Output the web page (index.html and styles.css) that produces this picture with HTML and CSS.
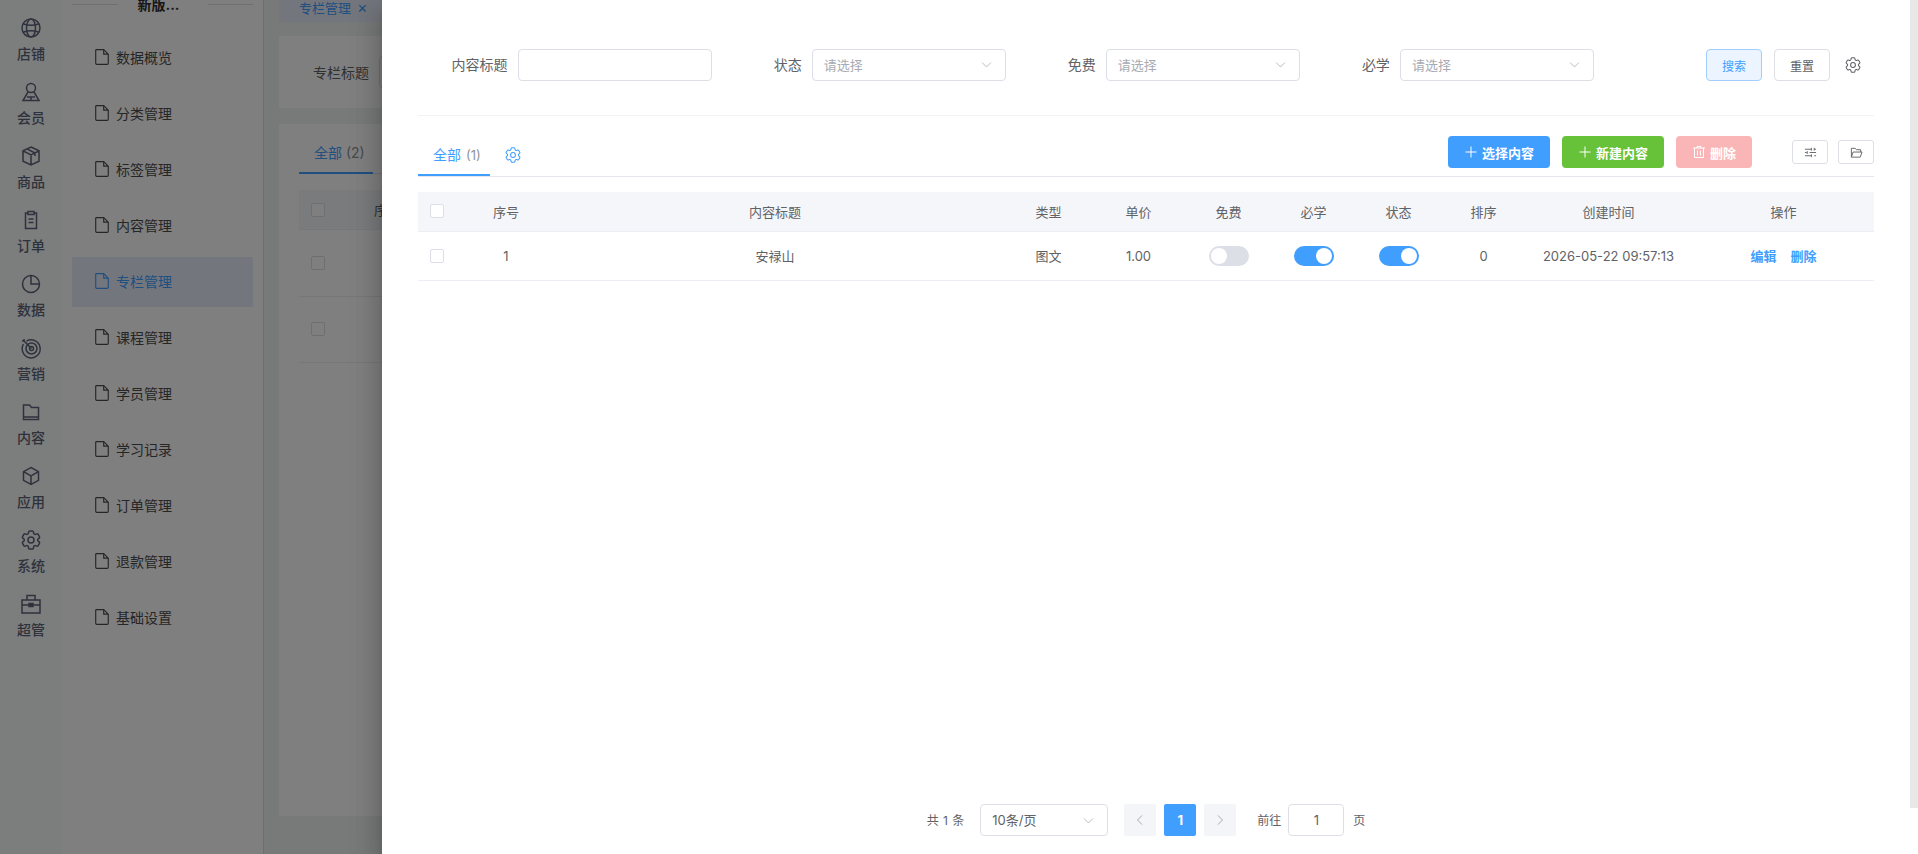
FILE: index.html
```html
<!DOCTYPE html>
<html lang="zh-CN">
<head>
    <meta charset="UTF-8">
    <meta name="viewport" content="width=device-width, initial-scale=1.0">
    <title>专栏管理</title>
    <link rel="stylesheet" href="styles.css">
</head>
<body>
    <svg class="defs" width="0" height="0">
        <symbol id="i-doc" viewBox="2 1 12 14"><path d="M3 1.500h6.500L13.500 5.500v8a1 1 0 0 1-1 1h-9a1 1 0 0 1-1-1v-11a1 1 0 0 1 .5-1zM9.500 1.500v4h4"/></symbol>
        <symbol id="i-gear" viewBox="2 2 20 20"><path d="M9.594 3.94c.09-.542.56-.94 1.11-.94h2.593c.55 0 1.02.398 1.11.94l.213 1.281c.063.374.313.686.645.87.074.04.147.083.22.127.325.196.72.257 1.075.124l1.217-.456a1.125 1.125 0 0 1 1.37.49l1.296 2.247a1.125 1.125 0 0 1-.26 1.431l-1.003.827c-.293.241-.438.613-.43.992a7.723 7.723 0 0 1 0 .255c-.008.378.137.75.43.991l1.004.827c.424.35.534.955.26 1.43l-1.298 2.247a1.125 1.125 0 0 1-1.369.491l-1.217-.456c-.355-.133-.75-.072-1.076.124a6.47 6.47 0 0 1-.22.128c-.331.183-.581.495-.644.869l-.213 1.281c-.09.543-.56.94-1.11.94h-2.594c-.55 0-1.019-.398-1.11-.94l-.213-1.281c-.062-.374-.312-.686-.644-.87a6.52 6.52 0 0 1-.22-.127c-.325-.196-.72-.257-1.076-.124l-1.217.456a1.125 1.125 0 0 1-1.369-.49l-1.297-2.247a1.125 1.125 0 0 1 .26-1.431l1.004-.827c.292-.24.437-.613.43-.991a6.932 6.932 0 0 1 0-.255c.007-.38-.138-.751-.43-.992l-1.004-.827a1.125 1.125 0 0 1-.26-1.43l1.297-2.247a1.125 1.125 0 0 1 1.37-.491l1.216.456c.356.133.751.072 1.076-.124.072-.044.146-.086.22-.128.332-.183.582-.495.644-.869l.214-1.28Z"/><circle cx="12" cy="12" r="3"/></symbol>
        <symbol id="i-down" viewBox="0 0 16 16"><path d="M2.500 5.500L8 11l5.500-5.500"/></symbol>
        <symbol id="i-plus" viewBox="0 0 14 14"><path d="M7 1.500v11M1.500 7h11"/></symbol>
    </svg>

    <div class="app">
        <nav class="rail">
            <a class="rail-item"><svg class="rail-icon" viewBox="0 0 20 20"><circle cx="10" cy="10" r="9"/><ellipse cx="10" cy="10" rx="4.500" ry="9"/><path d="M2.500 6c4.500 1.600 10.500 1.600 15 0M2.500 14c4.500-1.600 10.500-1.600 15 0"/></svg>店铺</a>
            <a class="rail-item"><svg class="rail-icon" viewBox="0 0 20 20"><circle cx="10" cy="6" r="4.500"/><path d="M7 10l-5 8.500h16L13 10M10 14.500v4M6 15h8"/></svg>会员</a>
            <a class="rail-item"><svg class="rail-icon" viewBox="0 0 20 20"><path d="M10 1l8 3.800v10.400L10 19l-8-3.800V4.800zM2 4.800L10 9l8-4.200M10 9v10M6 2.900l8 4.100v3"/></svg>商品</a>
            <a class="rail-item"><svg class="rail-icon" viewBox="0 0 20 20"><path d="M7 3H4.500v15.500h11V3H13M7 1.500h6v3H7zM7.500 9h5M7.500 12.500h5"/></svg>订单</a>
            <a class="rail-item"><svg class="rail-icon" viewBox="0 0 20 20"><circle cx="10" cy="10" r="8.500"/><path d="M10 1.500V10h8.500"/></svg>数据</a>
            <a class="rail-item"><svg class="rail-icon" viewBox="0 0 20 20"><path d="M5.500 3.200a9 9 0 1 1-3 3"/><circle cx="10.500" cy="10.500" r="5.500"/><circle cx="10.500" cy="10.500" r="2"/><path d="M10.500 10.500L3 3M1 3h2V1"/></svg>营销</a>
            <a class="rail-item"><svg class="rail-icon" viewBox="0 0 20 20"><path d="M2.500 3h6l2 2.500h7v12h-15zM2.500 15h15"/></svg>内容</a>
            <a class="rail-item"><svg class="rail-icon" viewBox="0 0 20 20"><path d="M10 1.500l7.500 4.200v8.600L10 18.500l-7.500-4.200V5.700zM2.500 5.700L10 10l7.500-4.300M10 10v8.500"/></svg>应用</a>
            <a class="rail-item"><svg class="rail-icon"><use href="#i-gear"/></svg>系统</a>
            <a class="rail-item"><svg class="rail-icon" viewBox="0 0 20 20"><path d="M1 6h18v13H1zM6 6V1.500h8V6M1 11h18M8 9.500h4v3H8z"/></svg>超管</a>
        </nav>

        <aside class="side">
            <div class="side-title"><span>新版...</span></div>
            <a class="menu-item"><svg class="menu-icon"><use href="#i-doc"/></svg>数据概览</a>
            <a class="menu-item"><svg class="menu-icon"><use href="#i-doc"/></svg>分类管理</a>
            <a class="menu-item"><svg class="menu-icon"><use href="#i-doc"/></svg>标签管理</a>
            <a class="menu-item"><svg class="menu-icon"><use href="#i-doc"/></svg>内容管理</a>
            <a class="menu-item active"><svg class="menu-icon"><use href="#i-doc"/></svg>专栏管理</a>
            <a class="menu-item"><svg class="menu-icon"><use href="#i-doc"/></svg>课程管理</a>
            <a class="menu-item"><svg class="menu-icon"><use href="#i-doc"/></svg>学员管理</a>
            <a class="menu-item"><svg class="menu-icon"><use href="#i-doc"/></svg>学习记录</a>
            <a class="menu-item"><svg class="menu-icon"><use href="#i-doc"/></svg>订单管理</a>
            <a class="menu-item"><svg class="menu-icon"><use href="#i-doc"/></svg>退款管理</a>
            <a class="menu-item"><svg class="menu-icon"><use href="#i-doc"/></svg>基础设置</a>
        </aside>

        <main class="main">
            <div class="page-tabs">
                <div class="page-tab">专栏管理<span class="page-tab-x">×</span></div>
            </div>
            <div class="card filter-card">
                <span>专栏标题</span>
                <div class="stub-input"></div>
            </div>
            <div class="card list-card">
                <div class="list-tabs"><div class="list-tab">全部 <em>(2)</em></div></div>
                <div class="stub-head"><span class="stub-check"></span><span class="stub-no">序号</span></div>
                <div class="stub-row"><span class="stub-check"></span></div>
                <div class="stub-row"><span class="stub-check"></span></div>
            </div>
        </main>
    </div>

    <div class="overlay"></div>

    <section class="drawer">
        <div class="drawer-body">
            <form class="search-form">
                <div class="form-item">
                    <label>内容标题</label>
                    <div class="field"></div>
                </div>
                <div class="form-item">
                    <label>状态</label>
                    <div class="field">请选择<svg class="caret"><use href="#i-down"/></svg></div>
                </div>
                <div class="form-item">
                    <label>免费</label>
                    <div class="field">请选择<svg class="caret"><use href="#i-down"/></svg></div>
                </div>
                <div class="form-item">
                    <label>必学</label>
                    <div class="field">请选择<svg class="caret"><use href="#i-down"/></svg></div>
                </div>
                <div class="form-actions">
                    <button type="button" class="btn-plain btn-search">搜索</button>
                    <button type="button" class="btn-plain">重置</button>
                    <svg class="gear"><use href="#i-gear"/></svg>
                </div>
            </form>

            <div class="toolbar">
                <div class="tab-active">全部<em>(1)</em></div>
                <svg class="gear gear-blue"><use href="#i-gear"/></svg>
                <div class="toolbar-actions">
                    <button type="button" class="btn btn-blue"><svg class="btn-icon"><use href="#i-plus"/></svg>选择内容</button>
                    <button type="button" class="btn btn-green"><svg class="btn-icon"><use href="#i-plus"/></svg>新建内容</button>
                    <button type="button" class="btn btn-pink">
                        <svg class="btn-icon" viewBox="0 0 14 14"><path d="M1 3h12M5 3V1.500h4V3M2.500 3v9.500h9V3M5.500 5.500v5M8.500 5.500v5"/></svg>删除
                    </button>
                    <button type="button" class="btn-small">
                        <svg class="small-icon" viewBox="0 0 14 14"><path d="M1 3.500h7M11 3.500h2M8 2v3M11 2v3M1 7h2M6 7h7M3.500 5.500v3M1 10.500h7M11 10.500h2M8 9v3"/></svg>
                    </button>
                    <button type="button" class="btn-small btn-small-last">
                        <svg class="small-icon" viewBox="0 0 14 14"><path d="M1.500 12V2.500h4l1.500 1.500h4.500v2.500M1.500 12l1.800-5.500h9.700L11 12z"/></svg>
                    </button>
                </div>
            </div>

            <table class="data-table">
                <colgroup>
                    <col class="col-check">
                    <col class="col-no">
                    <col class="col-title">
                    <col class="col-85">
                    <col class="col-price">
                    <col class="col-85">
                    <col class="col-85">
                    <col class="col-85">
                    <col class="col-85">
                    <col class="col-time">
                    <col class="col-op">
                </colgroup>
                <thead>
                    <tr>
                        <th class="cell-check"><span class="check"></span></th>
                        <th>序号</th>
                        <th>内容标题</th>
                        <th>类型</th>
                        <th>单价</th>
                        <th>免费</th>
                        <th>必学</th>
                        <th>状态</th>
                        <th>排序</th>
                        <th>创建时间</th>
                        <th class="cell-op">操作</th>
                    </tr>
                </thead>
                <tbody>
                    <tr>
                        <td class="cell-check"><span class="check"></span></td>
                        <td>1</td>
                        <td>安禄山</td>
                        <td>图文</td>
                        <td>1.00</td>
                        <td><span class="switch"></span></td>
                        <td><span class="switch on"></span></td>
                        <td><span class="switch on"></span></td>
                        <td>0</td>
                        <td>2026-05-22 09:57:13</td>
                        <td class="cell-op"><a>编辑</a><a>删除</a></td>
                    </tr>
                </tbody>
            </table>

            <div class="pager">
                <span class="pager-total">共 1 条</span>
                <div class="pager-size"><span>10条/页</span><svg class="caret"><use href="#i-down"/></svg></div>
                <button type="button" class="page-btn"><svg class="page-arrow" viewBox="0 0 12 12"><path d="M8 1.500L3.500 6 8 10.500"/></svg></button>
                <button type="button" class="page-btn current">1</button>
                <button type="button" class="page-btn"><svg class="page-arrow" viewBox="0 0 12 12"><path d="M4 1.500L8.500 6 4 10.500"/></svg></button>
                <span class="pager-goto">前往</span>
                <div class="pager-input">1</div>
                <span class="pager-unit">页</span>
            </div>
        </div>
        <div class="drawer-track"></div>
    </section>
</body>
</html>
```

FILE: styles.css
```css
* {
    box-sizing: border-box;
}
html, body {
    height: 100%;
}
body {
    margin: 0;
    overflow: hidden;
    background-color: #f0f3f3;
    color: #606266;
    font-family: Inter, "Noto Sans CJK SC", sans-serif;
    font-size: 13px;
}
svg {
    fill: none;
    stroke: currentColor;
}
em {
    font-style: normal;
}
.defs {
    position: absolute;
}
.app {
    display: flex;
    height: 100vh;
}

/* left rail */
.rail {
    width: 62px;
    flex: none;
    display: flex;
    flex-direction: column;
    gap: 18px;
    padding-top: 18px;
    background-color: #f9fbfb;
}
.rail-item {
    display: flex;
    flex-direction: column;
    align-items: center;
    gap: 6px;
    color: #5c6478;
    font-size: 14px;
    font-weight: 500;
    line-height: 20px;
}
.rail-icon {
    width: 20px;
    height: 20px;
    stroke-width: 1.5;
    overflow: visible;
}

/* second column */
.side {
    width: 202px;
    flex: none;
    padding: 0 10px;
    background-color: #fff;
    border-right: 1px solid #dcdfe6;
}
.side-title {
    display: flex;
    align-items: center;
    height: 20px;
    margin: -6px 0 19px;
    color: #303133;
    font-size: 14px;
    font-weight: 700;
}
.side-title::before, .side-title::after {
    content: "";
    flex: 1;
    border-top: 1px solid #dcdfe6;
}
.side-title span {
    width: 90px;
    padding-left: 20px;
}
.menu-item {
    display: flex;
    align-items: center;
    gap: 7px;
    height: 50px;
    margin-bottom: 6px;
    padding: 0 0 2px 23px;
    color: #4c4c4c;
    font-size: 14px;
}
.menu-item.active {
    background-color: #e6eefa;
    color: #409eff;
}
.menu-icon {
    width: 14px;
    height: 16px;
}

/* page behind the drawer */
.main {
    flex: 1;
    min-width: 0;
    padding: 0 0 38px 15px;
    display: flex;
    flex-direction: column;
    background-color: #f1f3f3;
}
.page-tabs {
    height: 22px;
    margin-bottom: 14px;
}
.page-tab {
    display: flex;
    align-items: center;
    width: 200px;
    height: 22px;
    padding: 0 0 8px 20px;
    background-color: #e6eefa;
    color: #409eff;
}
.page-tab-x {
    margin-left: 6px;
    font-size: 16px;
}
.card {
    background-color: #fff;
}
.filter-card {
    display: flex;
    align-items: center;
    gap: 10px;
    height: 72px;
    margin-bottom: 16px;
    padding-left: 34px;
    font-size: 14px;
}
.stub-input {
    width: 200px;
    height: 32px;
    border: 1px solid #dcdfe6;
    border-radius: 4px;
}
.list-card {
    flex: 1;
    padding: 0 20px;
}
.list-tabs {
    height: 50px;
    border-bottom: 1px solid #e4e7ed;
}
.list-tab {
    width: 74px;
    height: 50px;
    padding-top: 18px;
    padding-left: 15px;
    border-bottom: 2px solid #409eff;
    color: #409eff;
    font-size: 14px;
    white-space: nowrap;
}
.list-tab em {
    color: #909399;
}
.stub-head, .stub-row {
    display: flex;
    align-items: center;
    padding-left: 12px;
    border-bottom: 1px solid #ebeef5;
}
.stub-head {
    height: 40px;
    margin-top: 16px;
    background-color: #f5f6fa;
}
.stub-row {
    height: 66.5px;
}
.stub-check {
    width: 14px;
    height: 14px;
    border: 1px solid #dcdfe6;
    background-color: #fff;
    border-radius: 2px;
}
.stub-no {
    margin-left: 49px;
}

.overlay {
    position: absolute;
    inset: 0;
    background-color: rgba(0, 0, 0, 0.5);
}

/* drawer */
.drawer {
    position: absolute;
    top: 0;
    right: 0;
    bottom: 0;
    width: 1536px;
    display: flex;
    align-items: flex-start;
    background-color: #fff;
    box-shadow: 0 8px 10px -5px rgba(0, 0, 0, 0.2), 0 16px 24px 2px rgba(0, 0, 0, 0.14), 0 6px 30px 5px rgba(0, 0, 0, 0.12);
}
.drawer-body {
    width: 1528px;
    height: 100%;
    padding: 49px 36px 18px;
    display: flex;
    flex-direction: column;
}
.drawer-track {
    width: 8px;
    height: 808px;
    background-color: #e8e8e8;
}
.search-form {
    display: flex;
    padding-bottom: 34px;
    border-bottom: 1px solid #f2f3f5;
}
.form-item {
    width: 294.1px;
    display: flex;
    align-items: center;
    justify-content: flex-end;
    gap: 10px;
    font-size: 14px;
}
.form-item label {
    padding-bottom: 2px;
    white-space: nowrap;
}
.field {
    width: 194.5px;
    height: 32px;
    display: flex;
    align-items: center;
    justify-content: space-between;
    padding: 0 12px 2px 11px;
    border: 1px solid #dcdfe6;
    border-radius: 4px;
    color: #a8abb2;
    font-size: 13px;
}
.caret {
    width: 13px;
    height: 13px;
    color: #a8abb2;
}
.form-actions {
    display: flex;
    align-items: center;
    gap: 12px;
    margin-left: 111.6px;
}
.btn-plain {
    width: 56px;
    height: 32px;
    padding: 0;
    border: 1px solid #dcdfe6;
    border-radius: 4px;
    background-color: #fff;
    color: #606266;
    font-family: inherit;
    font-size: 12px;
}
.btn-search {
    background-color: #ecf5ff;
    border-color: #a0cfff;
    color: #409eff;
}
.gear {
    width: 16px;
    height: 16px;
    margin-left: 3px;
    color: #606266;
    stroke-width: 1.3;
}
.gear-blue {
    margin: 18px 0 0 15px;
    color: #409eff;
}

/* tabs and buttons above the table */
.toolbar {
    display: flex;
    align-items: center;
    height: 61px;
    border-bottom: 1px solid #e4e7ed;
}
.tab-active {
    width: 72px;
    height: 60px;
    padding: 29px 0 0 15px;
    border-bottom: 2px solid #409eff;
    color: #409eff;
    font-size: 14px;
    line-height: 20px;
}
.tab-active em {
    margin-left: 5px;
    color: #909399;
    font-size: 13px;
}
.toolbar-actions {
    display: flex;
    align-items: center;
    gap: 12px;
    margin-left: auto;
    padding-top: 12px;
}
.btn {
    display: flex;
    align-items: center;
    gap: 4px;
    height: 32px;
    padding: 0 16px;
    border: 0;
    border-radius: 4px;
    color: #fff;
    font-family: inherit;
    font-size: 13px;
    font-weight: 700;
}
.btn-blue {
    background-color: #409eff;
}
.btn-green {
    background-color: #67c23a;
}
.btn-pink {
    background-color: #fab6b6;
}
.btn-icon {
    width: 14px;
    height: 14px;
}
.btn-small {
    display: flex;
    align-items: center;
    justify-content: center;
    width: 36px;
    height: 24px;
    margin-left: 28px;
    padding: 0;
    border: 1px solid #dcdfe6;
    border-radius: 3px;
    background-color: #fff;
    color: #606266;
}
.btn-small-last {
    margin-left: -2px;
}
.small-icon {
    width: 13px;
    height: 13px;
}

.data-table {
    width: 100%;
    margin-top: 15px;
    table-layout: fixed;
    border-collapse: collapse;
    text-align: center;
}
.col-check { width: 50px; }
.col-no { width: 76px; }
.col-title { width: 462px; }
.col-85 { width: 85px; }
.col-price { width: 95px; }
.col-time { width: 165px; }
.data-table th {
    height: 39px;
    padding: 0;
    background-color: #f5f6fa;
    border-bottom: 1px solid #ebeef5;
    font-weight: 400;
}
.data-table td {
    height: 49px;
    padding: 0;
    border-bottom: 1px solid #ebeef5;
}
.data-table .cell-check {
    padding-left: 12px;
    text-align: left;
}
.data-table .cell-op {
    padding-left: 2px;
}
.check {
    display: block;
    width: 14px;
    height: 14px;
    border: 1px solid #dcdfe6;
    border-radius: 2px;
    background-color: #fff;
}
.switch {
    position: relative;
    display: inline-block;
    width: 40px;
    height: 20px;
    border-radius: 10px;
    background-color: #dcdfe6;
    vertical-align: middle;
}
.switch::after {
    content: "";
    position: absolute;
    top: 2px;
    left: 2px;
    width: 16px;
    height: 16px;
    border-radius: 50%;
    background-color: #fff;
}
.switch.on {
    background-color: #409eff;
}
.switch.on::after {
    left: 22px;
}
.cell-op a {
    margin: 0 7px;
    color: #409eff;
    font-weight: 600;
}

/* pagination */
.pager {
    display: flex;
    align-items: center;
    justify-content: center;
    margin-top: auto;
    height: 32px;
    font-size: 12px;
}
.pager-total {
    padding-bottom: 2px;
    word-spacing: 1px;
}
.pager-size {
    display: flex;
    align-items: center;
    justify-content: space-between;
    width: 128px;
    height: 32px;
    margin: 0 16px;
    padding: 0 12px 0 11px;
    border: 1px solid #dcdfe6;
    border-radius: 4px;
    font-size: 13px;
}
.pager-size span {
    padding-bottom: 1px;
}
.page-btn {
    display: flex;
    align-items: center;
    justify-content: center;
    width: 32px;
    height: 32px;
    margin-right: 8px;
    padding: 0;
    border: 0;
    border-radius: 2px;
    background-color: #f4f5f9;
    color: #a8abb2;
    font-family: inherit;
    font-size: 13px;
    font-weight: 700;
}
.page-btn.current {
    background-color: #409eff;
    color: #fff;
}
.page-arrow {
    width: 12px;
    height: 12px;
}
.pager-goto, .pager-unit {
    padding-bottom: 2px;
}
.pager-goto {
    margin-left: 13px;
}
.pager-input {
    width: 56px;
    height: 32px;
    margin: 0 9px 0 7px;
    border: 1px solid #dcdfe6;
    border-radius: 4px;
    font-size: 13px;
    line-height: 30px;
    text-align: center;
}
```
